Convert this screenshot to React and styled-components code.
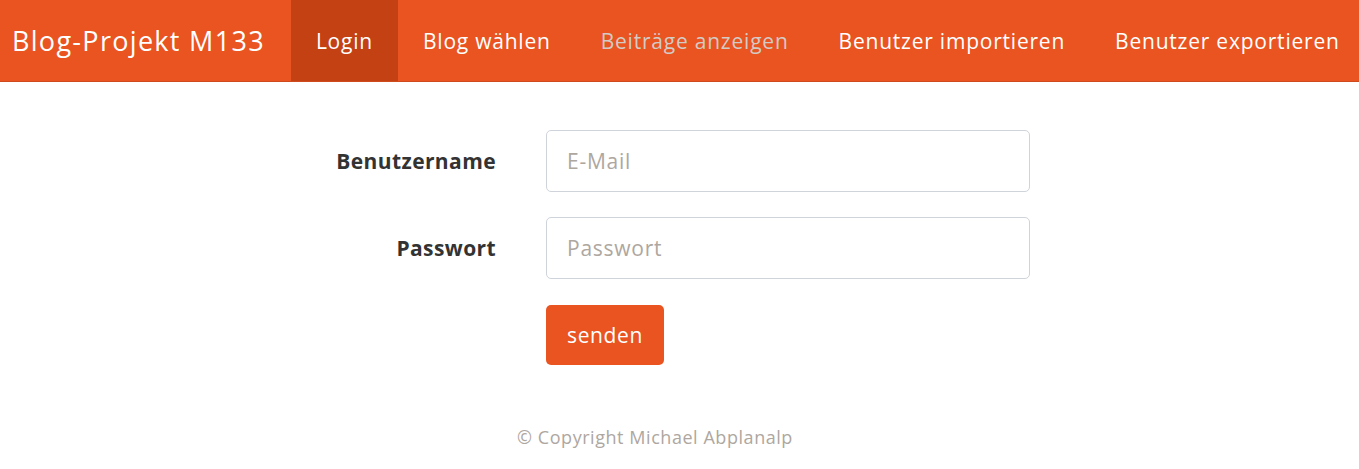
import React from "react";
import styled, { createGlobalStyle } from "styled-components";

const GlobalStyle = createGlobalStyle`
  html, body {
    margin: 0;
    padding: 0;
    background: #fff;
    font-family: "Open Sans", "Noto Sans", sans-serif;
  }
`;

const NavBar = styled.nav`
  display: flex;
  align-items: stretch;
  height: 82px;
  background-color: #e95420;
  border-bottom: 1px solid #cf4a1c;
  box-sizing: border-box;
`;

const Brand = styled.a`
  display: flex;
  align-items: center;
  padding: 0 26px 0 12px;
  color: #fff;
  font-size: 27px;
  letter-spacing: 1.3px;
  text-decoration: none;
  white-space: nowrap;
`;

const NavLink = styled.a`
  display: flex;
  align-items: center;
  padding: 0 25px;
  font-size: 21px;
  letter-spacing: 0.78px;
  text-decoration: none;
  white-space: nowrap;
  color: ${(p) => (p.$disabled ? "#d2cbc6" : "#fff")};
  background-color: ${(p) => (p.$active ? "#c34113" : "transparent")};
`;

const FormGrid = styled.form`
  display: grid;
  grid-template-columns: 200px 484px;
  column-gap: 50px;
  row-gap: 25px;
  margin: 48px 0 0 296px;
  align-items: center;
`;

const Label = styled.label`
  text-align: right;
  font-size: 21px;
  font-weight: 700;
  color: #333;
  letter-spacing: 0.4px;
`;

const Input = styled.input`
  box-sizing: border-box;
  height: 62px;
  width: 100%;
  padding: 0 20px;
  border: 1px solid #ced4da;
  border-radius: 5px;
  font-family: inherit;
  font-size: 21px;
  letter-spacing: 0.75px;
  color: #333;
  outline: none;
  &::placeholder {
    color: #aea79f;
  }
`;

const SubmitButton = styled.button`
  grid-column: 2;
  justify-self: start;
  height: 60px;
  width: 118px;
  margin-top: 1px;
  border: none;
  border-radius: 5px;
  background-color: #e95420;
  color: #fff;
  font-family: inherit;
  font-size: 21px;
  letter-spacing: 0.6px;
  cursor: pointer;
`;

const Footer = styled.footer`
  text-align: center;
  margin-top: 60px;
  padding-right: 49px;
  color: #aea79f;
  font-size: 18px;
  letter-spacing: 0.55px;
`;

const links = [
  { label: "Login", active: true },
  { label: "Blog wählen" },
  { label: "Beiträge anzeigen", disabled: true },
  { label: "Benutzer importieren" },
  { label: "Benutzer exportieren" },
];

const App = () => (
  <>
    <GlobalStyle />
    <NavBar>
      <Brand href="#">Blog-Projekt M133</Brand>
      {links.map((l) => (
        <NavLink key={l.label} href="#" $active={l.active} $disabled={l.disabled}>
          {l.label}
        </NavLink>
      ))}
    </NavBar>
    <FormGrid onSubmit={(e) => e.preventDefault()}>
      <Label htmlFor="email">Benutzername</Label>
      <Input id="email" type="email" placeholder="E-Mail" />
      <Label htmlFor="pw">Passwort</Label>
      <Input id="pw" type="password" placeholder="Passwort" />
      <SubmitButton type="submit">senden</SubmitButton>
    </FormGrid>
    <Footer>© Copyright Michael Abplanalp</Footer>
  </>
);

export default App;
